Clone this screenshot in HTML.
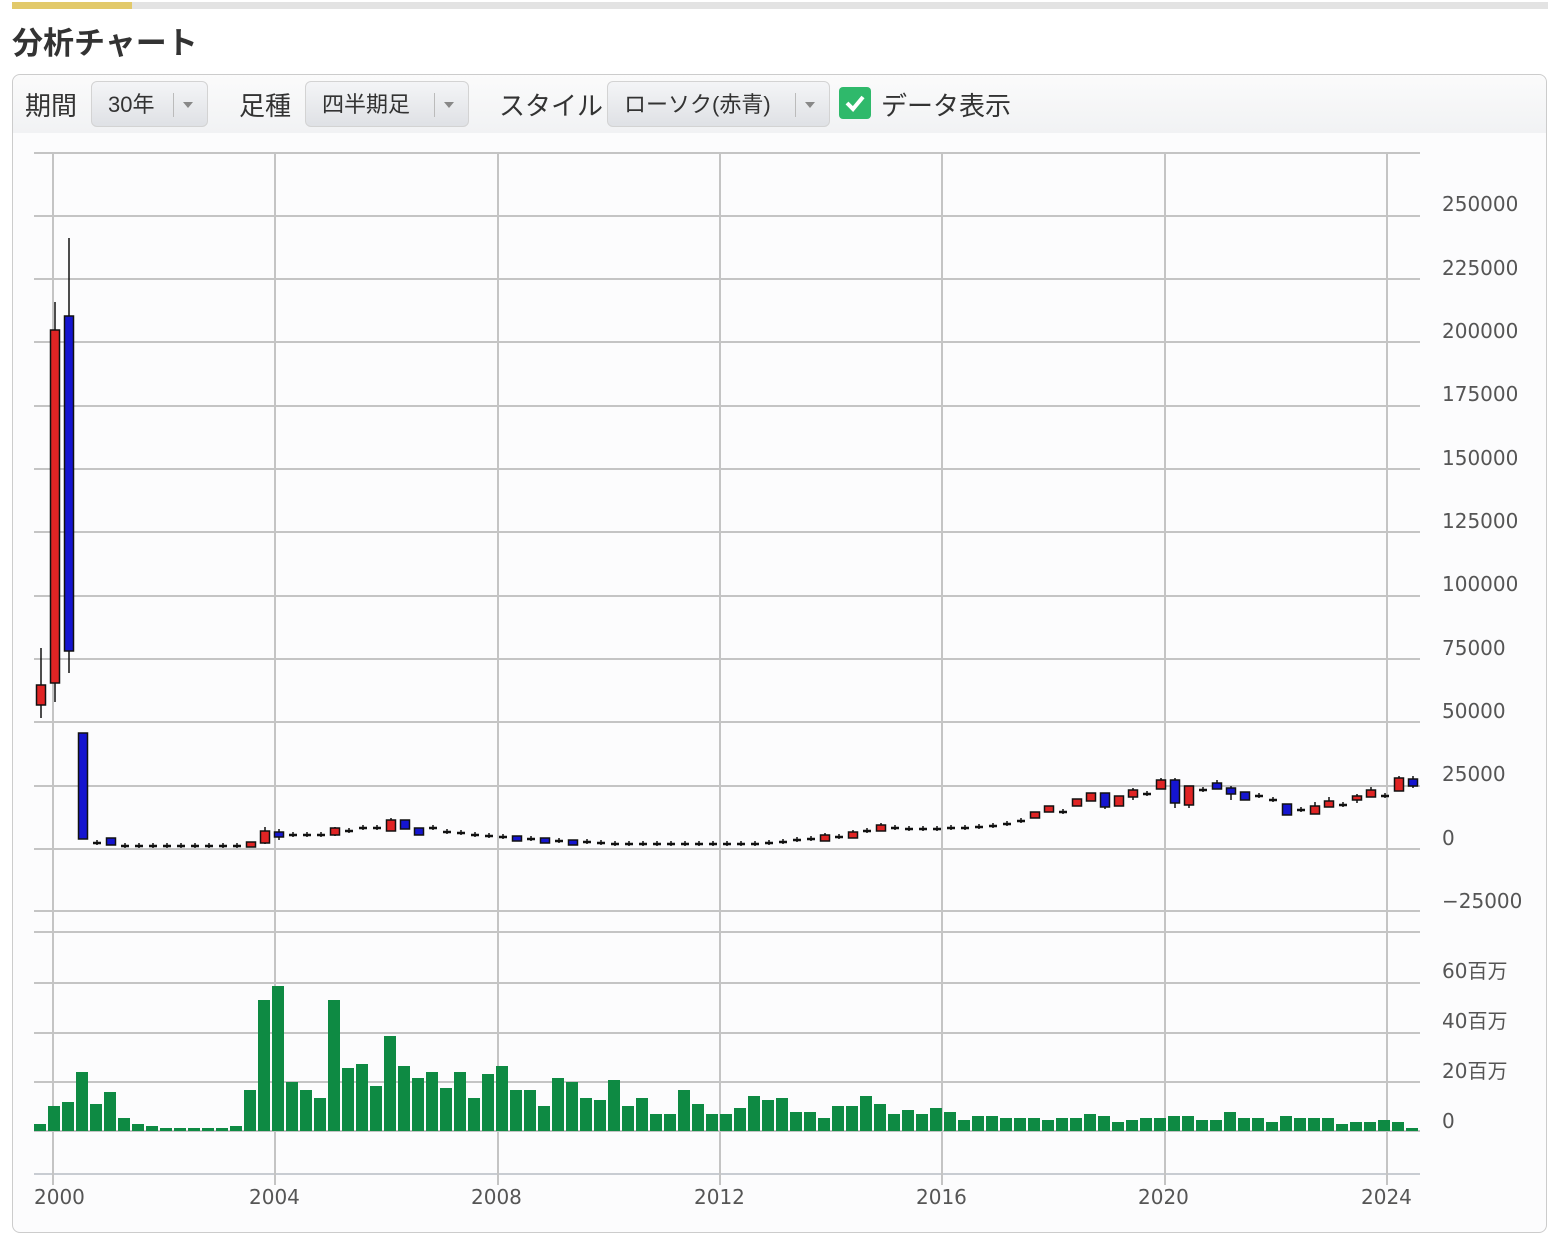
<!DOCTYPE html>
<html><head><meta charset="utf-8"><style>
body{margin:0;width:1550px;height:1240px;background:#fff;font-family:"Liberation Sans","Noto Sans CJK JP",sans-serif;position:relative;overflow:hidden}
.bar{position:absolute;left:12px;top:2px;width:1536px;height:7px;background:#e3e3e3}
.bar i{position:absolute;left:0;top:0;width:120px;height:7px;background:#e2c96a}
h1{position:absolute;left:12px;top:18px;margin:0;font-size:31px;font-weight:bold;color:#333;letter-spacing:0px}
.panel{position:absolute;left:12px;top:74px;width:1533px;height:1157px;border:1.5px solid #ccc;border-radius:8px;background:#fcfcfd}
.tb{position:absolute;left:0;top:0;width:1533px;height:58px;background:linear-gradient(#fbfbfb,#f1f2f4);border-radius:8px 8px 0 0}
.lb{position:absolute;top:11px;font-size:26px;color:#333}
.sel{position:absolute;top:6px;height:46px;border:1px solid #d3d3d3;border-radius:6px;background:linear-gradient(#f4f5f7,#dfe1e5);font-size:22px;color:#333;line-height:46px;padding-left:16px;box-sizing:border-box}
.sel b{position:absolute;right:33px;top:11px;width:1px;height:24px;background:#bbb}
.sel s{position:absolute;right:14px;top:20px;border-left:5px solid transparent;border-right:5px solid transparent;border-top:6px solid #888}
.cb{position:absolute;left:826px;top:12px;width:32px;height:32px;background:#2fb96b;border-radius:4px}
</style></head><body>
<div class="bar"><i></i></div>
<h1>分析チャート</h1>
<div class="panel">
<div class="tb">
<span class="lb" style="left:12px">期間</span>
<div class="sel" style="left:78px;width:117px">30年<b></b><s></s></div>
<span class="lb" style="left:226px">足種</span>
<div class="sel" style="left:292px;width:164px">四半期足<b></b><s></s></div>
<span class="lb" style="left:486px">スタイル</span>
<div class="sel" style="left:594px;width:223px">ローソク(赤青)<b></b><s></s></div>
<div class="cb"><svg width="32" height="32"><path d="M8 16 L14 22 L24 10" stroke="#fff" stroke-width="4" fill="none"/></svg></div>
<span class="lb" style="left:868px">データ表示</span>
</div>
</div>
<svg id="c" width="1550" height="1240" style="position:absolute;left:0;top:0" font-family="DejaVu Sans,Noto Sans CJK JP,sans-serif" font-size="20" fill="#555"></svg>
<script>
var s='';
var hl=[153,216,279,342,406,469,532,596,659,722,786,849,911,932,983,1033,1082,1131];
hl.forEach(function(y){s+='<line x1="34" x2="1420" y1="'+y+'" y2="'+y+'" stroke="#c4c4c4" stroke-width="2"/>';});
s+='<line x1="34" x2="1420" y1="1174" y2="1174" stroke="#c8ccd2" stroke-width="2"/>';
[53,275,498,720,942,1165,1387].forEach(function(x){s+='<line x1="'+x+'" x2="'+x+'" y1="153" y2="1185" stroke="#c4c4c4" stroke-width="2"/>';});
var yl=[['250000',211],['225000',275],['200000',338],['175000',401],['150000',465],['125000',528],['100000',591],['75000',655],['50000',718],['25000',781],['0',845],['−25000',908],['60百万',978],['40百万',1028],['20百万',1078],['0',1128]];
yl.forEach(function(a){s+='<text x="1442" y="'+a[1]+'">'+a[0]+'</text>';});
[['2000',34],['2004',249],['2008',471],['2012',694],['2016',916],['2020',1138],['2024',1361]].forEach(function(a){s+='<text x="'+a[1]+'" y="1204">'+a[0]+'</text>';});
var v=[1124,1106,1102,1072,1104,1092,1118,1124,1126,1128,1128,1128,1128,1128,1126,1090,1000,986,1082,1090,1098,1000,1068,1064,1086,1036,1066,1078,1072,1088,1072,1098,1074,1066,1090,1090,1106,1078,1082,1098,1100,1080,1106,1098,1114,1114,1090,1104,1114,1114,1108,1096,1100,1098,1112,1112,1118,1106,1106,1096,1104,1114,1110,1114,1108,1112,1120,1116,1116,1118,1118,1118,1120,1118,1118,1114,1116,1122,1120,1118,1118,1116,1116,1120,1120,1112,1118,1118,1122,1116,1118,1118,1118,1124,1122,1122,1120,1122,1128];
v.forEach(function(y,i){s+='<rect x="'+(34+14*i)+'" y="'+y+'" width="12" height="'+(1131-y)+'" fill="#0e8a43"/>';});
var C=[[0,685,705,648,718,'r'],[1,330,683,302,702,'r'],[2,316,651,238,673,'b'],[3,733,839,733,839,'b'],[5,838,845,838,845,'b'],[15,842,847,842,847,'r'],[16,831,843,827,844,'r'],[17,832,837,829,840,'b'],[21,828,835,827,836,'r'],[25,820,831,818,831,'r'],[26,820,829,820,829,'b'],[27,828,835,828,835,'b'],[34,836,841,836,841,'b'],[36,838,843,838,843,'b'],[38,840,845,840,845,'b'],
[71,812,818,812,818,'r'],[72,806,812,806,812,'r'],[74,799,806,799,806,'r'],[75,793,801,793,801,'r'],[76,793,807,793,809,'b'],[77,796,806,796,806,'r'],[78,790,797,788,800,'r'],[80,780,789,778,789,'r'],[81,780,803,778,808,'b'],[82,786,805,786,808,'r'],[84,783,789,780,789,'b'],[85,788,794,786,800,'b'],[86,792,800,792,800,'b'],[89,804,815,804,815,'b'],[91,806,814,802,814,'r'],[92,801,807,797,807,'r'],[94,796,800,794,803,'r'],[95,790,797,787,797,'r'],[97,778,791,776,791,'r'],[98,779,786,776,788,'b']];
var base=[836,837,840,841,843,845,846,846,846,846,846,846,846,846,846,846,846,838,835,835,835,834,831,828,828,828,826,826,828,832,833,835,836,837,838,839,840,841,842,842,843,844,844,844,844,844,844,844,844,844,844,844,843,842,840,839,838,837,835,831,828,828,829,829,829,828,828,827,826,824,821,818,815,812,808,806,804,800,798,794,788,786,790,790,786,786,792,796,800,803,810,813,810,805,802,799,796,792,790,786];
var used={};C.forEach(function(c){used[c[0]]=1;});
[56,58,60].forEach(function(i){C.push([i,base[i]-3,base[i]+3,base[i]-5,base[i]+3,'r']);used[i]=1;});
for(var i=4;i<99;i++){if(!used[i]){var y=base[i];s+='<line x1="'+(37+14*i)+'" x2="'+(45+14*i)+'" y1="'+y+'" y2="'+y+'" stroke="#111" stroke-width="2.5"/><line x1="'+(41+14*i)+'" x2="'+(41+14*i)+'" y1="'+(y-3)+'" y2="'+(y+2)+'" stroke="#111" stroke-width="1.5"/>';}}
C.forEach(function(c){var x=41+14*c[0];s+='<line x1="'+x+'" x2="'+x+'" y1="'+c[3]+'" y2="'+c[4]+'" stroke="#111" stroke-width="1.5"/><rect x="'+(x-4.5)+'" y="'+c[1]+'" width="9" height="'+Math.max(3,c[2]-c[1])+'" fill="'+(c[5]=='r'?'#e02424':'#1515d0')+'" stroke="#111" stroke-width="1.5"/>';});
document.getElementById('c').innerHTML=s;
</script>
</body></html>
